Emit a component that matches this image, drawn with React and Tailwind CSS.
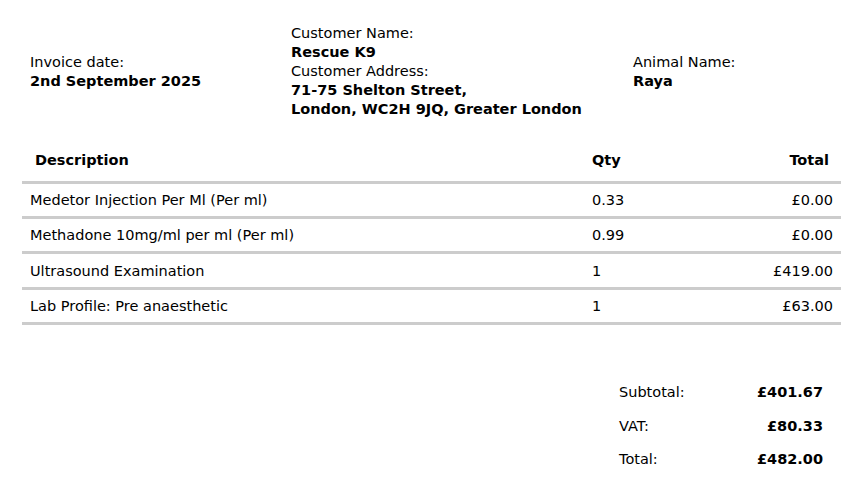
import React from 'react';

const items = [
  { desc: 'Medetor Injection Per Ml (Per ml)', qty: '0.33', total: '£0.00' },
  { desc: 'Methadone 10mg/ml per ml (Per ml)', qty: '0.99', total: '£0.00' },
  { desc: 'Ultrasound Examination', qty: '1', total: '£419.00' },
  { desc: 'Lab Profile: Pre anaesthetic', qty: '1', total: '£63.00' },
];

const totals = [
  { label: 'Subtotal:', value: '£401.67' },
  { label: 'VAT:', value: '£80.33' },
  { label: 'Total:', value: '£482.00' },
];

const App = () => {
  return (
    <div className="min-h-screen bg-white text-black text-[14.5px] leading-[19px] font-['DejaVu_Sans',sans-serif] pl-[22px] pr-[8px] pt-[24px]">

      {/* Invoice header */}
      <div className="grid grid-cols-[261px_342px_1fr] items-center pl-[8px]">
        <div>
          <div>Invoice date:</div>
          <div className="font-bold">2nd September 2025</div>
        </div>
        <div>
          <div>Customer Name:</div>
          <div className="font-bold">Rescue K9</div>
          <div>Customer Address:</div>
          <div className="font-bold">71-75 Shelton Street,</div>
          <div className="font-bold">London, WC2H 9JQ, Greater London</div>
        </div>
        <div>
          <div>Animal Name:</div>
          <div className="font-bold">Raya</div>
        </div>
      </div>

      {/* Line items */}
      <div className="mt-[19px]">
        <div className="grid grid-cols-[562px_1fr_120px] pt-[12.5px] pb-[11.5px] border-b-[3px] border-[#cccccc] font-bold">
          <div className="pl-[13px]">Description</div>
          <div className="pl-[8px]">Qty</div>
          <div className="text-right pr-[12px]">Total</div>
        </div>
        {items.map((item) => (
          <div key={item.desc} className="grid grid-cols-[562px_1fr_120px] pt-[7.3px] pb-[5.9px] border-b-[3px] border-[#cccccc]">
            <div className="pl-[8px]">{item.desc}</div>
            <div className="pl-[8px]">{item.qty}</div>
            <div className="text-right pr-[8px]">{item.total}</div>
          </div>
        ))}
      </div>

      {/* Totals */}
      <div className="mt-[51px] ml-auto mr-[18px] w-[204px]">
        {totals.map((t) => (
          <div key={t.label} className="flex justify-between py-[7.25px]">
            <span>{t.label}</span>
            <span className="font-bold">{t.value}</span>
          </div>
        ))}
      </div>
    </div>
  );
};

export default App;
